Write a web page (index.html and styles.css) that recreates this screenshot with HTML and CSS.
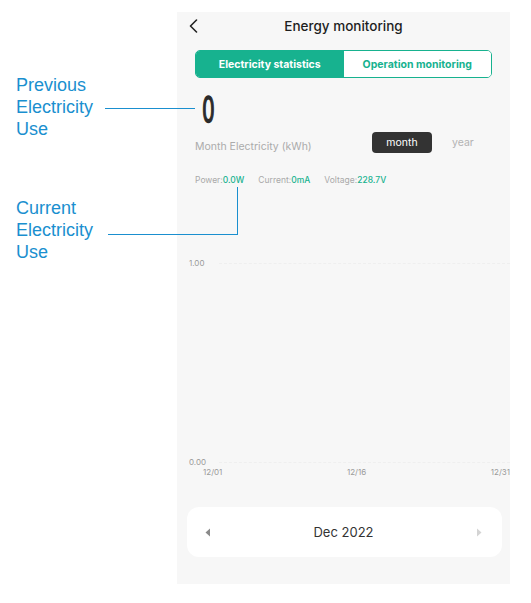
FILE: index.html
```html
<!DOCTYPE html>
<html>
<head>
<meta charset="utf-8">
<link rel="stylesheet" href="styles.css">
</head>
<body>
<div class="page">
  <div class="notes">
    <div class="note note-prev">Previous<br>Electricity<br>Use</div>
    <div class="note note-cur">Current<br>Electricity<br>Use</div>
  </div>
  <div class="phone">
    <div class="header">
      <svg class="back" width="9" height="14" viewBox="0 0 9 14"><polyline points="7.5,1 1.5,7 7.5,13" fill="none" stroke="#222" stroke-width="1.6" stroke-linecap="round" stroke-linejoin="round"/></svg>
      <div class="title">Energy monitoring</div>
    </div>
    <div class="tabs">
      <div class="tab active">Electricity statistics</div>
      <div class="tab">Operation monitoring</div>
    </div>
    <div class="big">0</div>
    <div class="month-row">
      <div class="month-label">Month Electricity (kWh)</div>
      <div class="switch">
        <div class="pill">month</div>
        <div class="year">year</div>
      </div>
    </div>
    <div class="stats">
      <span>Power:<b>0.0W</b></span>
      <span>Current:<b>0mA</b></span>
      <span>Voltage:<b>228.7V</b></span>
    </div>
    <div class="chart">
      <div class="yrow top"><span class="ylab">1.00</span><span class="grid"></span></div>
      <div class="yrow bottom"><span class="ylab">0.00</span><span class="grid"></span></div>
      <div class="xlabels"><span>12/01</span><span>12/16</span><span>12/31</span></div>
    </div>
    <div class="datebar">
      <svg width="6" height="9" viewBox="0 0 6 9"><polygon points="5,0.5 5,8.5 0.5,4.5" fill="#8a8a8a"/></svg>
      <div class="date">Dec 2022</div>
      <svg width="6" height="9" viewBox="0 0 6 9"><polygon points="1,0.5 1,8.5 5.5,4.5" fill="#d4d4d4"/></svg>
    </div>
  </div>
  <div class="conn c1"></div>
  <div class="conn c2h"></div>
  <div class="conn c2v"></div>
</div>
</body>
</html>
```

FILE: styles.css
```css
html, body {
  margin: 0;
  padding: 0;
  background: #ffffff;
}
body {
  font-family: "Inter", "Noto Sans", sans-serif;
  width: 531px;
  height: 603px;
  overflow: hidden;
}
.page {
  position: relative;
  display: flex;
  align-items: flex-start;
}
.notes {
  width: 161px;
  padding-left: 16px;
  padding-top: 74px;
  display: flex;
  flex-direction: column;
  gap: 57px;
}
.note {
  font-family: "Liberation Sans", Arial, sans-serif;
  font-size: 18px;
  line-height: 22px;
  color: #1a8fcf;
}
.phone {
  margin-top: 12px;
  width: 333px;
  height: 572px;
  background: #f7f7f7;
  display: flex;
  flex-direction: column;
}
.header {
  position: relative;
  height: 28px;
  display: flex;
  align-items: center;
  justify-content: center;
}
.back {
  position: absolute;
  left: 12px;
  top: 7px;
}
.title {
  font-size: 13.5px;
  color: #1e1e1e;
  font-weight: 500;
}
.tabs {
  margin: 10px 18px 0 18px;
  height: 28px;
  border: 1px solid #17b28f;
  border-radius: 5px;
  display: flex;
  overflow: hidden;
  box-sizing: border-box;
}
.tab {
  flex: 1;
  display: flex;
  align-items: center;
  justify-content: center;
  font-size: 10.5px;
  font-weight: 700;
  color: #17b28f;
  background: #ffffff;
}
.tab.active {
  background: #17b28f;
  color: #ffffff;
}
.big {
  margin: 15px 0 0 25px;
  height: 34px;
  font-family: "DejaVu Sans Condensed", "DejaVu Sans", sans-serif;
  font-weight: 400;
  font-size: 36px;
  line-height: 34px;
  color: #2a2a2a;
  -webkit-text-stroke: 1.4px #2a2a2a;
  transform: scaleX(0.62);
  transform-origin: left center;
}
.month-row {
  margin: 4px 0 0 18px;
  display: flex;
  align-items: center;
  height: 22px;
}
.month-label {
  width: 177px;
  font-size: 10.5px;
  color: #ababab;
  padding-top: 8px;
}
.switch {
  display: flex;
  align-items: center;
}
.pill {
  width: 60px;
  height: 21px;
  border-radius: 4px;
  background: #333333;
  color: #ffffff;
  font-size: 10.5px;
  display: flex;
  align-items: center;
  justify-content: center;
}
.year {
  margin-left: 20px;
  font-size: 10.5px;
  color: #b3b3b3;
}
.stats {
  margin: 21px 0 0 18px;
  font-size: 8.5px;
  color: #a9a9a9;
  display: flex;
  gap: 14px;
  height: 12px;
  line-height: 12px;
}
.stats b {
  font-weight: 500;
  color: #17b28f;
}
.chart {
  margin: 72px 0 0 12px;
  width: 321px;
  display: flex;
  flex-direction: column;
}
.yrow {
  display: flex;
  align-items: center;
  height: 10px;
}
.yrow.bottom {
  margin-top: 189px;
}
.ylab {
  width: 30px;
  font-size: 8px;
  color: #9a9a9a;
}
.grid {
  flex: 1;
  border-top: 1px dashed #efefef;
}
.xlabels {
  display: flex;
  justify-content: space-between;
  padding-left: 14px;
  font-size: 8px;
  color: #9a9a9a;
  height: 10px;
  line-height: 10px;
}
.datebar {
  margin: 30px 8px 0 10px;
  height: 50px;
  background: #ffffff;
  border-radius: 12px;
  display: flex;
  align-items: center;
  justify-content: space-between;
  padding: 0 20px 0 18px;
}
.date {
  font-size: 13px;
  color: #333333;
}
.conn {
  position: absolute;
  background: #1a8fcf;
}
.c1 {
  left: 105px;
  top: 108px;
  width: 90px;
  height: 1px;
}
.c2h {
  left: 108px;
  top: 234px;
  width: 130px;
  height: 1px;
}
.c2v {
  left: 237px;
  top: 187px;
  width: 1px;
  height: 48px;
}
```
